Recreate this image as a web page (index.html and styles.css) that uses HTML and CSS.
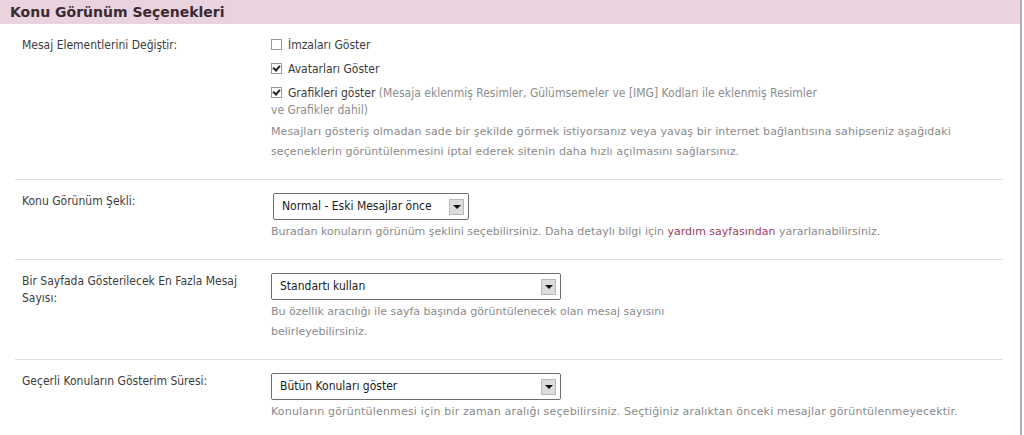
FILE: index.html
```html
<!DOCTYPE html>
<html>
<head>
  <meta charset="utf-8">
  <!-- Options page style -->
  <link rel="stylesheet" href="styles.css">
</head>
<body>
  <div class="panel">
    <!-- Section title -->
    <div class="panel-head">Konu Görünüm Seçenekleri</div>

    <!-- Message elements -->
    <div class="opt-row">
      <div class="opt-label">Mesaj Elementlerini Değiştir:</div>
      <div class="opt-field">
        <div class="check"><span class="box"></span>İmzaları Göster</div>
        <div class="check"><span class="box on"></span>Avatarları Göster</div>
        <div class="check"><span class="box on"></span>Grafikleri göster <span class="muted">(Mesaja eklenmiş Resimler, Gülümsemeler ve [IMG] Kodları ile eklenmiş Resimler<br>ve Grafikler dahil)</span></div>
        <div class="desc first">Mesajları gösteriş olmadan sade bir şekilde görmek istiyorsanız veya yavaş bir internet bağlantısına sahipseniz aşağıdaki<br>seçeneklerin görüntülenmesini iptal ederek sitenin daha hızlı açılmasını sağlarsınız.</div>
      </div>
    </div>

    <!-- Display mode -->
    <div class="opt-row">
      <div class="opt-label">Konu Görünüm Şekli:</div>
      <div class="opt-field">
        <div class="select small"><span class="select-text">Normal - Eski Mesajlar önce</span><span class="select-btn"></span></div>
        <div class="desc">Buradan konuların görünüm şeklini seçebilirsiniz. Daha detaylı bilgi için <a href="#">yardım sayfasından</a> yararlanabilirsiniz.</div>
      </div>
    </div>

    <!-- Posts per page -->
    <div class="opt-row">
      <div class="opt-label">Bir Sayfada Gösterilecek En Fazla Mesaj<br>Sayısı:</div>
      <div class="opt-field">
        <div class="select"><span class="select-text">Standartı kullan</span><span class="select-btn"></span></div>
        <div class="desc">Bu özellik aracılığı ile sayfa başında görüntülenecek olan mesaj sayısını<br>belirleyebilirsiniz.</div>
      </div>
    </div>

    <!-- Active threads period -->
    <div class="opt-row last">
      <div class="opt-label">Geçerli Konuların Gösterim Süresi:</div>
      <div class="opt-field">
        <div class="select"><span class="select-text">Bütün Konuları göster</span><span class="select-btn"></span></div>
        <div class="desc spaced">Konuların görüntülenmesi için bir zaman aralığı seçebilirsiniz. Seçtiğiniz aralıktan önceki mesajlar görüntülenmeyecektir.</div>
      </div>
    </div>
  </div>
</body>
</html>
```

FILE: styles.css
```css
/* Page base */
body {
  margin: 0;
  background: #fff;
  font-family: "DejaVu Sans Condensed", "DejaVu Sans", sans-serif;
  font-size: 12px;
  color: #3c3c3c;
}

/* Outer box with the thin right edge */
.panel {
  width: 1022px;
  height: 435px;
  border-right: 2px solid #b3aac4;
  box-sizing: border-box;
}

/* Pink title bar */
.panel-head {
  height: 24px;
  line-height: 24px;
  padding-left: 10px;
  background: #e8d3df;
  color: #3a2a32;
  font-family: "DejaVu Sans", sans-serif;
  font-size: 14px;
  font-weight: bold;
}

/* One option row: label on the left, field on the right */
.opt-row {
  display: grid;
  grid-template-columns: 249px 1fr;
  margin: 0 17px 0 15px;
  padding: 13px 0 17px 7px;
  border-bottom: 1px solid #dfe0e4;
}

.opt-row.last {
  border-bottom: none;
}

.opt-label {
  line-height: 17px;
}

.opt-field {
  line-height: 17px;
}

/* Checkbox lines */
.check {
  margin-bottom: 7px;
}

.box {
  display: inline-block;
  width: 9px;
  height: 9px;
  border: 1px solid #999;
  background: #fff;
  margin-right: 6px;
  vertical-align: -1px;
  position: relative;
}

.box.on:after {
  content: "";
  position: absolute;
  left: 2px;
  top: 0;
  width: 3px;
  height: 5px;
  border: solid #222;
  border-width: 0 2px 2px 0;
  transform: rotate(40deg);
}

.muted {
  color: #8c8c8c;
}

/* Grey help text */
.desc {
  font-family: "DejaVu Sans", sans-serif;
  font-size: 11px;
  line-height: 20px;
  color: #8a8a8a;
  margin-top: 2px;
}

.desc.first {
  margin-top: -4px;
  letter-spacing: 0.1px;
}

.desc.spaced {
  letter-spacing: 0.18px;
}

.desc a {
  color: #a33a62;
  text-decoration: none;
}

/* Old style drop-down */
.select {
  display: flex;
  align-items: center;
  width: 290px;
  height: 27px;
  border: 1px solid #6e6e6e;
  border-radius: 2px;
  box-sizing: border-box;
  padding: 0 4px 0 8px;
  background: #fff;
  color: #1a1a1a;
}

.select.small {
  width: 196px;
  margin-left: 2px;
}

.select-text {
  flex: 1;
}

.select-btn {
  width: 15px;
  height: 16px;
  background: #dcdcdc;
  border: 1px solid #b8b8b8;
  box-sizing: border-box;
  display: flex;
  align-items: center;
  justify-content: center;
}

.select-btn:after {
  content: "";
  border-left: 4px solid transparent;
  border-right: 4px solid transparent;
  border-top: 4px solid #111;
}
```
